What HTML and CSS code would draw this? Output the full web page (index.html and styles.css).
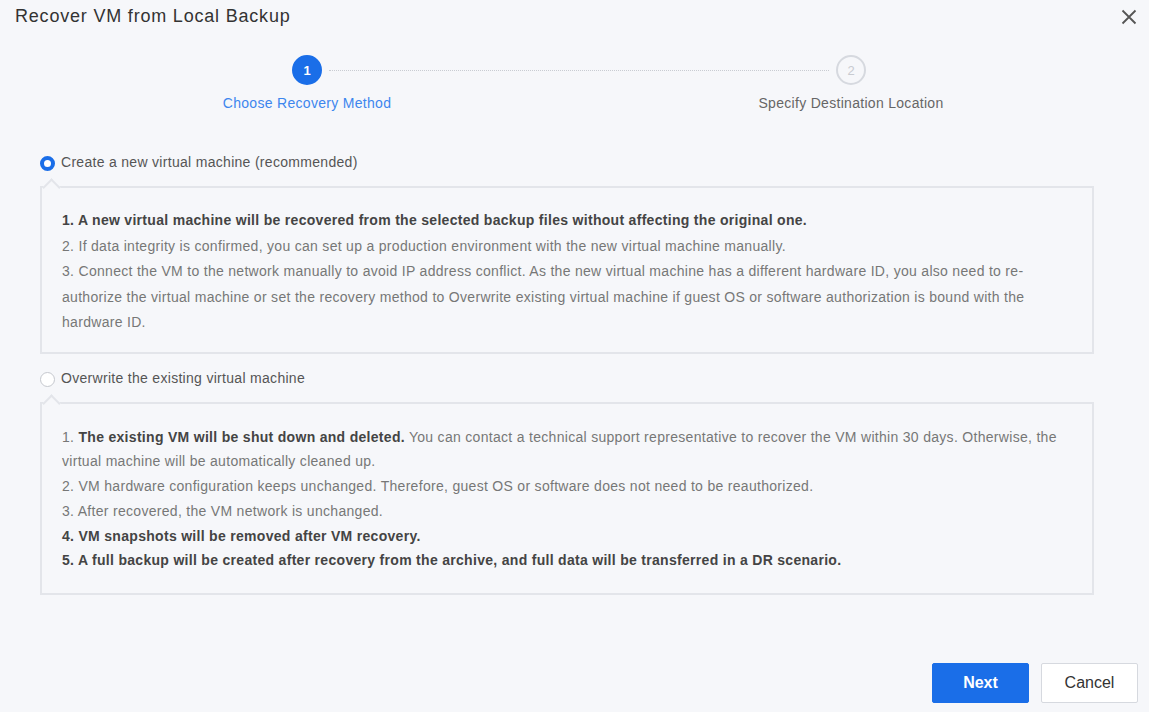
FILE: index.html
```html
<!DOCTYPE html>
<html lang="en">
  <head>
    <meta charset="UTF-8" />
    <title>Recover VM from Local Backup</title>
    <link rel="stylesheet" href="styles.css">
  </head>
  <body>
    <div class="dialog">
      <!-- Header -->
      <div class="dialog-header">
        <h1>Recover VM from Local Backup</h1>
        <span class="close-btn">
          <svg width="16" height="16" viewBox="0 0 16 16">
            <path d="M1.5 1.5 L14.5 14.5 M14.5 1.5 L1.5 14.5" stroke="#555" stroke-width="1.8" fill="none" />
          </svg>
        </span>
      </div>
      <!-- Steps -->
      <div class="steps">
        <div class="steps-track">
          <span class="step-dot active">1</span>
          <span class="step-line"></span>
          <span class="step-dot">2</span>
        </div>
        <div class="steps-labels">
          <span class="step-label active">Choose Recovery Method</span>
          <span class="step-label">Specify Destination Location</span>
        </div>
      </div>
      <!-- Options -->
      <div class="options">
        <label class="option">
          <span class="radio checked"></span>
          Create a new virtual machine (recommended)
        </label>
        <div class="option-box">
          <p class="strong">1. A new virtual machine will be recovered from the selected backup files without affecting the original one.</p>
          <p>2. If data integrity is confirmed, you can set up a production environment with the new virtual machine manually.</p>
          <p>3. Connect the VM to the network manually to avoid IP address conflict. As the new virtual machine has a different hardware ID, you also need to re-authorize the virtual machine or set the recovery method to Overwrite existing virtual machine if guest OS or software authorization is bound with the hardware ID.</p>
        </div>
        <label class="option">
          <span class="radio"></span>
          Overwrite the existing virtual machine
        </label>
        <div class="option-box box-second">
          <p>1. <b>The existing VM will be shut down and deleted.</b> You can contact a technical support representative to recover the VM within 30 days. Otherwise, the virtual machine will be automatically cleaned up.</p>
          <p>2. VM hardware configuration keeps unchanged. Therefore, guest OS or software does not need to be reauthorized.</p>
          <p>3. After recovered, the VM network is unchanged.</p>
          <p class="strong">4. VM snapshots will be removed after VM recovery.</p>
          <p class="strong">5. A full backup will be created after recovery from the archive, and full data will be transferred in a DR scenario.</p>
        </div>
      </div>
      <!-- Footer -->
      <div class="dialog-footer">
        <button class="btn btn-primary">Next</button>
        <button class="btn">Cancel</button>
      </div>
    </div>
  </body>
</html>
```

FILE: styles.css
```css
* {
  margin: 0;
  padding: 0;
  box-sizing: border-box;
}
body {
  font-family: "Liberation Sans", Arial, sans-serif;
  background-color: #f6f7fa;
  color: #333;
}
.dialog {
  width: 1149px;
  height: 712px;
  display: flex;
  flex-direction: column;
}
/* Header */
.dialog-header {
  display: flex;
  justify-content: space-between;
  align-items: center;
  padding: 3px 12px 0 15px;
  height: 30px;
}
.dialog-header h1 {
  font-size: 18px;
  font-weight: normal;
  letter-spacing: 0.8px;
  color: #333;
}
.close-btn {
  display: flex;
  cursor: pointer;
}
/* Steps */
.steps {
  padding-top: 25px;
}
.steps-track {
  display: flex;
  align-items: center;
  margin-left: 292px;
  width: 574px;
}
.step-dot {
  width: 30px;
  height: 30px;
  border-radius: 50%;
  border: 2px solid #d6d9df;
  color: #c8cbd1;
  font-size: 13px;
  display: flex;
  align-items: center;
  justify-content: center;
}
.step-dot.active {
  background-color: #1a6ee8;
  border-color: #1a6ee8;
  color: #fff;
  font-weight: bold;
}
.step-line {
  flex: 1;
  margin: 0 7px;
  border-top: 1px dotted #c9ccd2;
}
.steps-labels {
  display: flex;
  justify-content: space-between;
  margin-left: 207px;
  width: 744px;
  margin-top: 10px;
}
.step-label {
  width: 200px;
  text-align: center;
  font-size: 14px;
  letter-spacing: 0.3px;
  color: #666;
}
.step-label.active {
  color: #3d86ee;
}
/* Options */
.options {
  padding: 42px 55px 0 40px;
}
.option {
  display: flex;
  align-items: center;
  gap: 6px;
  font-size: 14px;
  letter-spacing: 0.3px;
  color: #555;
  height: 18px;
}
.radio {
  width: 15px;
  height: 15px;
  border-radius: 50%;
  border: 1px solid #c5c8ce;
  background: #fff;
  margin-top: 3px;
}
.radio.checked {
  border: 4px solid #1a6ee8;
}
.option-box {
  position: relative;
  margin-top: 15px;
  margin-bottom: 15px;
  border: 2px solid #e3e5ea;
  padding: 20px 30px 16px 20px;
  font-size: 14px;
  letter-spacing: 0.3px;
  line-height: 25.5px;
  color: #777;
}
.option-box::before {
  content: "";
  position: absolute;
  top: -7px;
  left: 3px;
  width: 11px;
  height: 11px;
  background: #f6f7fa;
  border-top: 2px solid #e3e5ea;
  border-left: 2px solid #e3e5ea;
  transform: rotate(45deg);
}
.box-second {
  padding-top: 21px;
  padding-bottom: 20px;
  line-height: 24.8px;
}
.option-box .strong,
.option-box b {
  font-weight: bold;
  color: #444;
}
/* Footer */
.dialog-footer {
  margin-top: auto;
  display: flex;
  justify-content: flex-end;
  gap: 12px;
  padding: 0 11px 9px 0;
}
.btn {
  width: 97px;
  height: 40px;
  border: 1px solid #d6d9df;
  background: #fff;
  color: #333;
  font-family: inherit;
  font-size: 16px;
  border-radius: 2px;
  cursor: pointer;
}
.btn-primary {
  background: #1a6ee8;
  border-color: #1a6ee8;
  color: #fff;
  font-weight: bold;
}
```
